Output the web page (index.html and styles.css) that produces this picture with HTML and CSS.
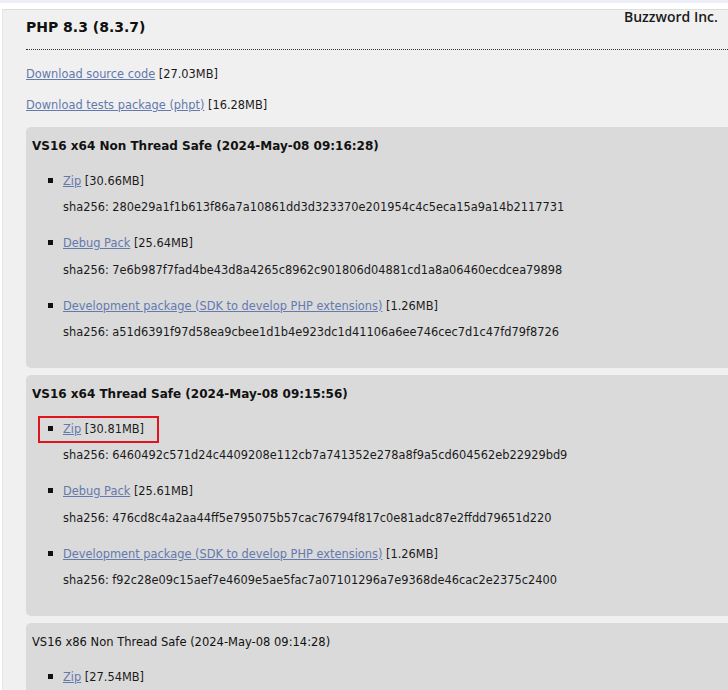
FILE: index.html
```
<!doctype html>
<html lang="en">
  <head>
    <meta charset="UTF-8" />
    <meta name="viewport" content="width=device-width, initial-scale=1.0" />
    <title>PHP 8.3 downloads</title>
    <link rel="stylesheet" href="styles.css">
  </head>
  <body>
    <div class="topbar"></div>
    <div class="page">
      <div class="watermark">Buzzword Inc.</div>
      <h2 class="release-title">PHP 8.3 (8.3.7)</h2>

      <p class="download"><a href="#">Download source code</a> [27.03MB]</p>
      <p class="download"><a href="#">Download tests package (phpt)</a> [16.28MB]</p>

      <div class="innerbox">
        <h4 class="build-title">VS16 x64 Non Thread Safe (2024-May-08 09:16:28)</h4>
        <ul class="files">
          <li><a href="#">Zip</a> [30.66MB]
            <span class="sha">sha256: 280e29a1f1b613f86a7a10861dd3d323370e201954c4c5eca15a9a14b2117731</span>
          </li>
          <li><a href="#">Debug Pack</a> [25.64MB]
            <span class="sha">sha256: 7e6b987f7fad4be43d8a4265c8962c901806d04881cd1a8a06460ecdcea79898</span>
          </li>
          <li><a href="#">Development package (SDK to develop PHP extensions)</a> [1.26MB]
            <span class="sha">sha256: a51d6391f97d58ea9cbee1d1b4e923dc1d41106a6ee746cec7d1c47fd79f8726</span>
          </li>
        </ul>
      </div>

      <div class="innerbox">
        <h4 class="build-title">VS16 x64 Thread Safe (2024-May-08 09:15:56)</h4>
        <ul class="files">
          <li><span class="highlight"></span><a href="#">Zip</a> [30.81MB]
            <span class="sha">sha256: 6460492c571d24c4409208e112cb7a741352e278a8f9a5cd604562eb22929bd9</span>
          </li>
          <li><a href="#">Debug Pack</a> [25.61MB]
            <span class="sha">sha256: 476cd8c4a2aa44ff5e795075b57cac76794f817c0e81adc87e2ffdd79651d220</span>
          </li>
          <li><a href="#">Development package (SDK to develop PHP extensions)</a> [1.26MB]
            <span class="sha">sha256: f92c28e09c15aef7e4609e5ae5fac7a07101296a7e9368de46cac2e2375c2400</span>
          </li>
        </ul>
      </div>

      <div class="innerbox">
        <h4 class="build-title plain">VS16 x86 Non Thread Safe (2024-May-08 09:14:28)</h4>
        <ul class="files">
          <li><a href="#">Zip</a> [27.54MB]</li>
        </ul>
      </div>
    </div>
  </body>
</html>
```

FILE: styles.css
```
:root {
  --page-bg: #f0f0f0;
  --box-bg: #dadada;
  --link-color: #6479ad;
  --text-color: #1a1a1a;
}

html,
body {
  overflow: hidden;
}

body {
  margin: 0;
  padding: 0;
  background: #fff;
  color: var(--text-color);
  font-family: "DejaVu Sans", Verdana, sans-serif;
  font-size: 11.4px;
  line-height: 14px;
}

.topbar {
  height: 3px;
  background: #eeeef9;
}

.page {
  position: relative;
  width: 760px;
  margin: 6px 0 0 2px;
  padding: 0 0 0 23px;
  background: var(--page-bg);
  border-top: 1px solid #dedede;
  border-left: 1px solid #e6e6e6;
  min-height: 700px;
}

.watermark {
  position: absolute;
  top: -2px;
  left: 621px;
  font-family: "Open Sans", sans-serif;
  font-weight: 600;
  font-size: 14px;
  line-height: 18px;
  color: #1a1a1a;
}

.release-title {
  margin: 8px 0 0;
  padding-bottom: 13px;
  font-size: 14px;
  line-height: 18px;
  font-weight: bold;
  color: #111;
  border-bottom: 1px dotted #333;
}

.download {
  margin: 17px 0 0;
}

a {
  color: var(--link-color);
  text-decoration: underline;
}

.innerbox {
  margin-top: 15px;
  padding: 12px 6px 28.5px;
  background: var(--box-bg);
  border-radius: 5px;
}

.innerbox + .innerbox {
  margin-top: 7.5px;
}

.build-title {
  margin: 0;
  font-size: 12px;
  line-height: 14px;
  font-weight: bold;
  color: #111;
}

.build-title.plain {
  font-size: 11.5px;
  font-weight: normal;
}

.files {
  list-style: none;
  margin: 20.5px 0 0;
  padding: 0;
}

.files li {
  position: relative;
  padding-left: 31px;
}

.files li + li {
  margin-top: 22px;
}

.files li::before {
  content: "";
  display: inline-block;
  width: 5px;
  height: 5px;
  margin-left: -15px;
  margin-right: 10px;
  background: #111;
  vertical-align: 2px;
}

.sha {
  display: block;
  margin-top: 12.5px;
}

/* red annotation around the selected file */
.highlight {
  position: absolute;
  left: 6px;
  top: -6px;
  width: 117px;
  height: 23px;
  border: 2px solid #e0141e;
}
```
